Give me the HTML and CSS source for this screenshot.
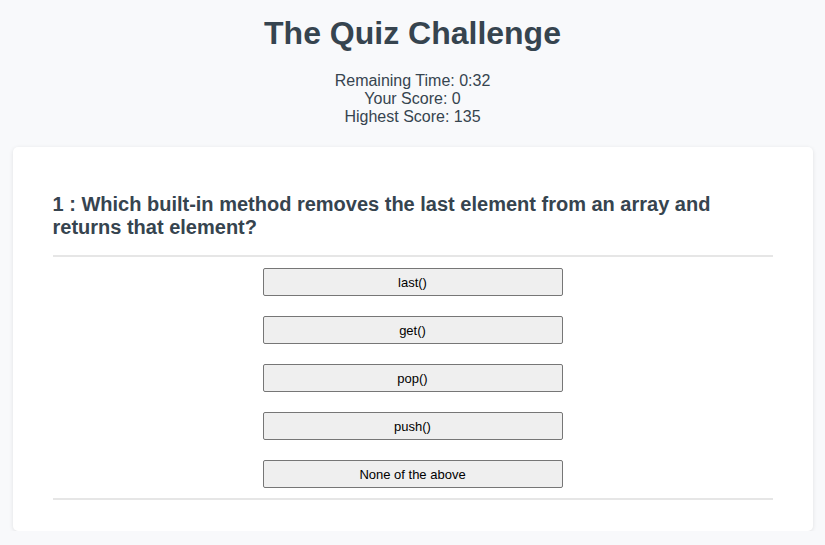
FILE: index.html
```html
<!DOCTYPE html>
<html>
<head>
<meta charset="utf-8">
<link rel="stylesheet" href="styles.css">
</head>
<body>
<header class="header">
  <h1 class="title">The Quiz Challenge</h1>
  <div class="stats">
    <div>Remaining Time: 0:32</div>
    <div>Your Score: 0</div>
    <div>Highest Score: 135</div>
  </div>
</header>
<main class="card">
  <h2 class="question">1 : Which built-in method removes the last element from an array and returns that element?</h2>
  <hr class="rule">
  <div class="answers">
    <button class="answer">last()</button>
    <button class="answer">get()</button>
    <button class="answer">pop()</button>
    <button class="answer">push()</button>
    <button class="answer">None of the above</button>
  </div>
  <hr class="rule">
</main>
</body>
</html>
```
FILE: styles.css
```css
* { box-sizing: border-box; }
html, body {
  margin: 0;
  padding: 0;
  background: #f8f9fb;
  font-family: "Liberation Sans", Arial, Helvetica, sans-serif;
  color: #36444f;
}
.header {
  text-align: center;
  padding-top: 14px;
}
.title {
  margin: 0;
  font-size: 32px;
  line-height: 38px;
  font-weight: bold;
}
.stats {
  margin-top: 20px;
  font-size: 16px;
  line-height: 18px;
}
.card {
  width: 800px;
  margin: 21px auto 0;
  background: #fff;
  border-radius: 5px;
  box-shadow: 0 1px 4px rgba(0,0,0,0.10);
  padding: 46px 40px 31px;
}
.question {
  margin: 0;
  font-size: 20px;
  line-height: 23px;
  font-weight: bold;
}
.rule {
  margin: 16px 0 0;
  border: 0;
  height: 2px;
  background: #e6e6e6;
}
.answers {
  display: flex;
  flex-direction: column;
  align-items: center;
  gap: 20px;
  padding: 11px 0 10px;
}
.answers + .rule { margin-top: 0; }
.answer {
  width: 300px;
  height: 28px;
  background: #efefef;
  border: 1px solid #767676;
  border-radius: 2px;
  font-family: "Liberation Sans", Arial, sans-serif;
  font-size: 13px;
  color: #000;
  padding: 0;
}
```
